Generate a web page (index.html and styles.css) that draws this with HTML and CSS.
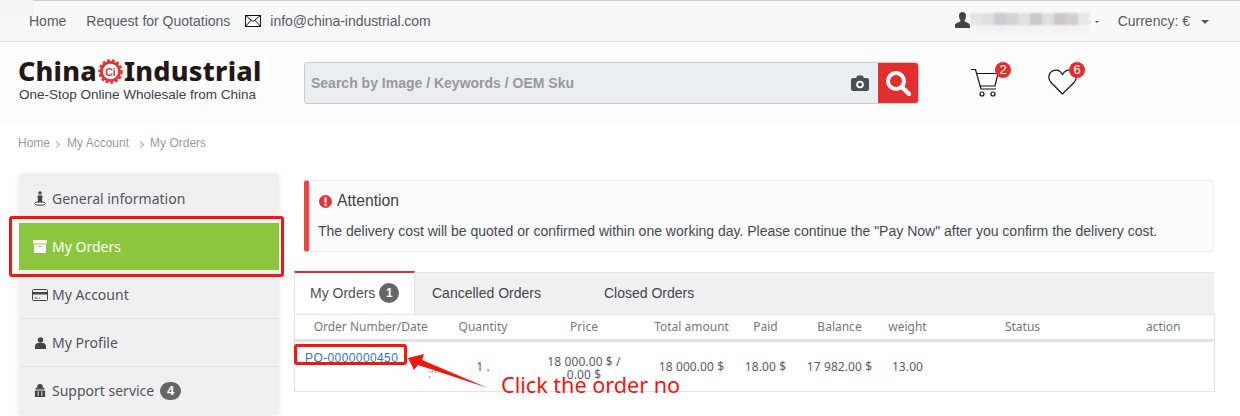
FILE: index.html
```html
<!DOCTYPE html>
<html lang="en">
<head>
<meta charset="utf-8">
<title>My Orders</title>
<link rel="stylesheet" href="styles.css">
</head>
<body>
<div class="page">
  <div class="corner-patch"></div>
  <div class="topbar">
    <nav class="topnav">
      <a>Home</a>
      <a>Request for Quotations</a>
      <span class="mail">
        <svg width="17" height="13" viewBox="0 0 17 13"><rect x=".5" y=".5" width="15" height="11" fill="#fff" stroke="#111"/><path d="M.5.5 8 6.5 15.5.5M.5 11.500 6 5.200M15.500 11.500 10 5.200" fill="none" stroke="#111"/></svg>
        <a class="mail-link">info@china-industrial.com</a>
      </span>
    </nav>
    <div class="account">
      <svg class="user-icon" width="17" height="17" viewBox="0 0 17 17"><path d="M8.500 0c2.400 0 3.600 1.800 3.600 4 0 1.700-.7 3.200-1.500 4v1.500c2 .8 5.400 1.800 5.400 3.800V16H1v-2.700c0-2 3.400-3 5.400-3.800V8c-.8-.8-1.500-2.300-1.500-4 0-2.200 1.200-4 3.600-4z" fill="#444"/></svg>
      <div class="blur-name">
        <i class="b1"></i><i class="b2"></i><i class="b3"></i><i class="b4"></i><i class="b5"></i><i class="b6"></i><i class="b7"></i><i class="b8"></i><i class="b9"></i><i class="b10"></i>
      </div>
      <span class="caret small"></span>
      <span class="currency">Currency: €</span>
      <span class="caret"></span>
    </div>
  </div>

  <header class="header">
    <div class="brand">
      <div class="logo">China<svg class="gear" width="25" height="25" viewBox="0 0 26 26"><circle cx="13" cy="13" r="9.500" fill="#fff" stroke="#e5343a" stroke-width="3"/><circle cx="13" cy="13" r="11.500" fill="none" stroke="#e5343a" stroke-width="2.500" stroke-dasharray="3 2.020"/><text class="gear-text" x="13" y="17.500" text-anchor="middle">Ci</text></svg><span class="logo-b">Industrial</span></div>
      <div class="tagline">One-Stop Online Wholesale from China</div>
    </div>
    <div class="search">
      <span class="search-text">Search by Image / Keywords / OEM Sku</span>
      <svg class="camera" width="18" height="16" viewBox="0 0 18 16"><path d="M2 3h3l1.500-2.500h5L13 3h3a2 2 0 0 1 2 2v9a2 2 0 0 1-2 2H2a2 2 0 0 1-2-2V5a2 2 0 0 1 2-2z" fill="#4a4f55"/><circle cx="9" cy="9.500" r="3.800" fill="#fff"/><circle cx="9" cy="9.500" r="2" fill="#4a4f55"/></svg>
      <button class="search-btn" type="button" aria-label="Search">
        <svg width="26" height="26" viewBox="0 0 26 26"><circle cx="11" cy="11" r="8" fill="none" stroke="#fff" stroke-width="4"/><path d="M17 17l7 7" stroke="#fff" stroke-width="4.500" stroke-linecap="round"/></svg>
      </button>
    </div>
    <div class="shop-icons">
      <span class="shop-icon">
        <svg width="30" height="30" viewBox="0 0 30 30"><path d="M1 1.500h4.500L11 21h15M7 5.500h21L25 18H9.500" fill="none" stroke="#111" stroke-width="1.200"/><circle cx="12" cy="26" r="2" fill="none" stroke="#111" stroke-width="1.200"/><circle cx="23" cy="26" r="2" fill="none" stroke="#111" stroke-width="1.200"/></svg>
        <b class="count">2</b>
      </span>
      <span class="shop-icon heart">
        <svg width="29" height="26" viewBox="0 0 29 26"><path d="M14.500 25 3 13.500C-.5 10 .5 3.500 5 1.700 9 .2 12.500 2 14.500 5.500 16.500 2 20 .2 24 1.700c4.500 1.800 5.500 8.300 2 11.800z" fill="#fff" stroke="#111" stroke-width="1.200"/></svg>
        <b class="count">6</b>
      </span>
    </div>
  </header>

  <div class="crumbs">
    <a>Home</a><span class="sep"></span><a>My Account</a><span class="sep wide"></span><a>My Orders</a>
  </div>

  <div class="content">
    <aside class="sidebar">
      <a class="side-item">
        <span class="side-slot"><svg width="14" height="15" viewBox="0 0 14 15"><circle cx="7" cy="2" r="1.800" fill="#444"/><path d="M4.500 4.500h5l-.5 5v2H5v-2z" fill="#444"/><ellipse cx="7" cy="12.500" rx="5.500" ry="1.800" fill="none" stroke="#444"/></svg></span>
        General information
      </a>
      <a class="side-item active">
        <span class="side-slot"><svg width="14" height="13" viewBox="0 0 14 13"><path d="M0 0h14v3.500H0zM1 4.500h12V13H1z" fill="#fff"/><path d="M5.500 6.500h3" stroke="#8cc63f"/></svg></span>
        My Orders
      </a>
      <a class="side-item">
        <span class="side-slot"><svg width="16" height="12" viewBox="0 0 16 12"><rect x=".5" y=".5" width="15" height="11" rx="1" fill="none" stroke="#444"/><path d="M1 3h14v2.500H1z" fill="#444"/><path d="M2.500 9h3M7 9h1" stroke="#444"/></svg></span>
        My Account
      </a>
      <a class="side-item">
        <span class="side-slot"><svg width="11" height="12" viewBox="0 0 12 13"><circle cx="6" cy="3.200" r="3" fill="#444"/><path d="M0 13v-3c0-2.500 2-3.500 3-3.500h6c1 0 3 1 3 3.500v3z" fill="#444"/></svg></span>
        My Profile
      </a>
      <a class="side-item">
        <span class="side-slot"><svg width="12" height="13" viewBox="0 0 13 14"><path d="M3.500 4V3a3 3 0 0 1 6 0v1h1.500l.5 2H1.500L2 4zM1 7h11v7H1z" fill="#444"/><path d="M4.500 8v5M8.500 8v5" stroke="#eee"/></svg></span>
        Support service <span class="side-badge">4</span>
      </a>
    </aside>

    <main class="main">
      <section class="alert">
        <h4 class="alert-title">
          <svg width="13" height="13" viewBox="0 0 13 13"><circle cx="6.500" cy="6.500" r="6.500" fill="#e5343a"/><path d="M6.500 2.500v5" stroke="#fff" stroke-width="2.200"/><circle cx="6.500" cy="9.800" r="1.200" fill="#fff"/></svg>
          Attention
        </h4>
        <p class="alert-text">The delivery cost will be quoted or confirmed within one working day. Please continue the "Pay Now" after you confirm the delivery cost.</p>
      </section>

      <section class="orders">
        <div class="tabs">
          <a class="tab active">My Orders <span class="tab-badge">1</span></a>
          <a class="tab cancelled">Cancelled Orders</a>
          <a class="tab closed">Closed Orders</a>
        </div>
        <table class="order-table">
          <colgroup>
            <col class="c1"><col class="c2"><col class="c3"><col class="c4"><col class="c5"><col class="c6"><col class="c7"><col class="c8"><col class="c9">
          </colgroup>
          <thead>
            <tr><th>Order Number/Date</th><th>Quantity</th><th>Price</th><th>Total amount</th><th>Paid</th><th>Balance</th><th>weight</th><th>Status</th><th>action</th></tr>
          </thead>
          <tbody>
            <tr>
              <td class="po"><a>PO-0000000450</a></td>
              <td>1 .</td>
              <td class="price">18 000.00 $ /<br>0.00 $</td>
              <td>18 000.00 $</td>
              <td>18.00 $</td>
              <td>17 982.00 $</td>
              <td>13.00</td>
              <td></td>
              <td></td>
            </tr>
          </tbody>
        </table>
      </section>
    </main>
  </div>

  <div class="mark mark-menu"></div>
  <div class="mark mark-po"></div>
  <svg class="arrow" width="84" height="44" viewBox="0 0 84 44"><path d="M0 5 16 1 14 7 80 35 10 12 6 17z" fill="#f5150f"/></svg>
  <div class="note">Click the order no</div>
  <div class="stray">;^</div>
</div>
</body>
</html>
```

FILE: styles.css
```css
* { box-sizing: border-box; }
html, body { margin: 0; padding: 0; }
body {
  width: 1240px;
  height: 416px;
  overflow: hidden;
  background: #fff;
  font-family: "Liberation Sans", Arial, sans-serif;
  color: #444;
}
.page { position: relative; width: 1240px; height: 416px; overflow: hidden; }
.corner-patch { position: absolute; left: 0; top: 0; width: 33px; height: 16px; background: #f3f3f3; }

.topbar {
  height: 42px;
  display: flex;
  justify-content: space-between;
  align-items: center;
  padding: 0 29px;
  background: #f8f8f8;
  border-top: 1px solid #cfcfcf;
  border-bottom: 1px solid #e4e4e4;
  font-size: 14px;
  color: #555c66;
}
.topnav { display: flex; align-items: center; gap: 20px; }
.mail { display: flex; align-items: center; gap: 9px; margin-left: -5px; }
.mail-link { margin-left: -1px; letter-spacing: -.04px; }
.account { display: flex; align-items: center; margin-right: 2px; }
.user-icon { margin-right: -1px; margin-top: -2px; }
.blur-name { position: relative; display: flex; height: 18px; width: 125px; margin-top: 2px; align-items: flex-start; filter: blur(.8px); }
.blur-name::after { content: ""; position: absolute; left: 6px; top: 12px; width: 112px; height: 7px; background: #f3f3f3; }
.blur-name i { display: block; width: 12px; height: 12px; }
.b1 { background: #e6e4e0; } .b2 { background: #e0dfdc; } .b3 { background: #cbcbcd; }
.b4 { background: #d2d3d6; } .b5 { background: #e2e1de; } .b6 { background: #c8c9cd; }
.b7 { background: #dfdfdf; } .b8 { background: #cac8c6; } .b9 { background: #d0d0d3; }
.b10 { background: #e8e8e9; }
.caret {
  width: 0; height: 0;
  border-left: 4px solid transparent;
  border-right: 4px solid transparent;
  border-top: 4px solid #555;
  margin-left: 11px;
  margin-top: 2px;
}
.caret.small { border-left-width: 2px; border-right-width: 2px; border-top-width: 2px; margin-left: 0; }
.currency { margin-left: 19px; }

.header {
  height: 82px;
  display: flex;
  align-items: flex-start;
  background: #fcfcfc;
  padding-left: 18px;
}
.brand { width: 286px; padding-top: 15px; }
.logo {
  display: flex;
  align-items: center;
  width: 252px;
  height: 28px;
  background: #fff;
  font-family: "Noto Sans", sans-serif;
  font-weight: 800;
  font-size: 27px;
  line-height: 28px;
  letter-spacing: .2px;
  color: #231815;
}
.logo-b { letter-spacing: .25px; }
.gear { margin: 0 1px 0 1px; flex: none; }
.gear-text { font: 700 11px "Liberation Sans", sans-serif; fill: #e5343a; letter-spacing: 0; }
.tagline { font-size: 13.5px; line-height: 18px; color: #3a3f47; margin: 1px 0 0 1px; }
.search {
  margin-top: 20px;
  width: 615px;
  height: 42px;
  display: flex;
  align-items: center;
  background: #eaedf1;
  border: 1px solid #ccc;
  border-radius: 3px;
  padding-left: 6px;
}
.search-text { flex: 1; font-size: 14px; font-weight: 700; color: #999; }
.camera { margin-right: 9px; }
.search-btn {
  width: 40px;
  height: 40px;
  padding: 0;
  border: 0;
  border-radius: 0 3px 3px 0;
  background: #e12f2f;
  display: flex;
  align-items: center;
  justify-content: center;
}
.shop-icons { display: flex; margin-left: 51px; margin-top: 26px; gap: 48px; }
.shop-icon { position: relative; display: block; width: 30px; height: 30px; }
.heart { margin-top: 1px; }
.count {
  position: absolute;
  left: 25px;
  top: -6px;
  width: 16px;
  height: 16px;
  border-radius: 50%;
  background: #e12f2f;
  color: #fff;
  font-size: 13px;
  font-weight: 400;
  line-height: 16px;
  text-align: center;
}
.heart .count { left: 21px; top: -7px; }

.crumbs {
  display: flex;
  align-items: center;
  height: 16px;
  margin: 11px 0 0 18px;
  font-size: 12px;
  color: #9a9a9a;
}
.sep {
  width: 5px;
  height: 5px;
  margin: 2px 8px 0 4px;
  border-top: 1px solid #aaa;
  border-right: 1px solid #aaa;
  transform: rotate(45deg);
}
.sep.wide { margin-left: 9px; margin-right: 7px; }

.content { display: flex; align-items: flex-start; margin-top: 23px; padding-left: 19px; }
.sidebar {
  flex: none;
  width: 260px;
  background: #f0f0f0;
  border-radius: 4px 4px 0 0;
  box-shadow: 0 0 5px rgba(0,0,0,.1);
  font-family: "Noto Sans", "Open Sans", sans-serif;
  font-size: 14px;
  color: #50555c;
}
.side-item {
  display: flex;
  align-items: center;
  height: 48px;
  padding-left: 14px;
  border-bottom: 1px solid #e3e3e3;
}
.side-item:first-child, .side-item:nth-child(2), .side-item:last-child { border-bottom: 0; }
.side-item:last-child { padding-bottom: 1px; }
.side-item.active { background: #8cc63f; color: #fff; margin: 1px 0; height: 47px; }
.side-slot { flex: none; display: flex; justify-content: center; width: 14px; margin-right: 5px; }
.side-slot svg { flex: none; }
.side-badge {
  display: inline-block;
  width: 21px;
  height: 18px;
  margin-left: 6px;
  border-radius: 9px;
  background: #666;
  color: #fff;
  font: 700 13px/18px "Liberation Sans", sans-serif;
  text-align: center;
}

.main { flex: none; width: 920px; margin-left: 15px; }
.alert {
  margin: 6px 0 0 10px;
  height: 72px;
  padding: 12px 14px 0 10px;
  width: 910px;
  background: #fbfbfb;
  border: 1px solid #efefef;
  border-left: 5px solid #f44343;
  border-radius: 3px;
}
.alert-title {
  display: flex;
  align-items: center;
  gap: 5px;
  margin: 0;
  font-size: 15.7px;
  font-weight: 400;
  line-height: 16px;
  color: #404040;
}
.alert-text { margin: 14px 0 0 -1px; font-size: 14px; line-height: 16px; white-space: nowrap; color: #434a54; }

.orders { margin-top: 20px; }
.tabs {
  display: flex;
  height: 42px;
  background: #f1f1f1;
  border-top: 1px solid #e6e6e6;
  font-size: 14px;
  color: #3f4650;
}
.tab { display: flex; align-items: center; height: 40px; }
.tab.active {
  width: 121px;
  margin-top: -2px;
  height: 43px;
  padding: 0 0 1px 15px;
  background: #fff;
  color: #4a5058;
  border-top: 2px solid #e12f2f;
  border-left: 1px solid #e3e3e3;
  border-right: 1px solid #e3e3e3;
  font-size: 14px;
}
.tab-badge {
  display: inline-block;
  width: 20px;
  height: 20px;
  margin-left: 4px;
  border-radius: 50%;
  background: #666;
  color: #fff;
  font: 700 12px/20px "Liberation Sans", sans-serif;
  text-align: center;
}
.cancelled { margin-left: 17px; width: 172px; }
.order-table {
  width: 920px;
  table-layout: fixed;
  border-collapse: collapse;
  font-family: "Noto Sans", "Open Sans", sans-serif;
  font-size: 12px;
  color: #5c5c5c;
  border: 1px solid #e3e3e3;
  border-top: 0;
}
.c1 { width: 152px; } .c2 { width: 73px; } .c3 { width: 129px; } .c4 { width: 86px; }
.c5 { width: 62px; } .c6 { width: 86px; } .c7 { width: 50px; } .c8 { width: 180px; } .c9 { width: 102px; }
.order-table th {
  height: 26px;
  padding: 0 0 2px;
  font-weight: 400;
  color: #777;
  text-align: center;
  border-top: 1px solid #e3e3e3;
  border-bottom: 3px solid #e3e3e3;
}
.order-table td { height: 51px; padding: 0; text-align: center; line-height: 14px; letter-spacing: .1px; }
.order-table td.price { padding-top: 3px; line-height: 13px; }
.order-table td.po { text-align: left; vertical-align: top; padding: 9px 0 0 10px; }
.po a { color: #3b73af; font-family: "Liberation Sans", sans-serif; font-size: 12px; letter-spacing: .4px; }

.mark { position: absolute; border: 3px solid #f5150f; border-radius: 3px; }
.mark-menu { left: 9px; top: 216px; width: 275px; height: 61px; }
.mark-po { left: 294px; top: 344px; width: 113px; height: 21px; }
.arrow { position: absolute; left: 408px; top: 353px; }
.note {
  position: absolute;
  left: 501px;
  top: 370px;
  font-family: "Noto Sans", sans-serif;
  font-size: 21.6px;
  line-height: 29px;
  color: #f5150f;
}
.stray { position: absolute; left: 428px; top: 368px; font-size: 11px; line-height: 11px; color: #6a8fb5; }
```
